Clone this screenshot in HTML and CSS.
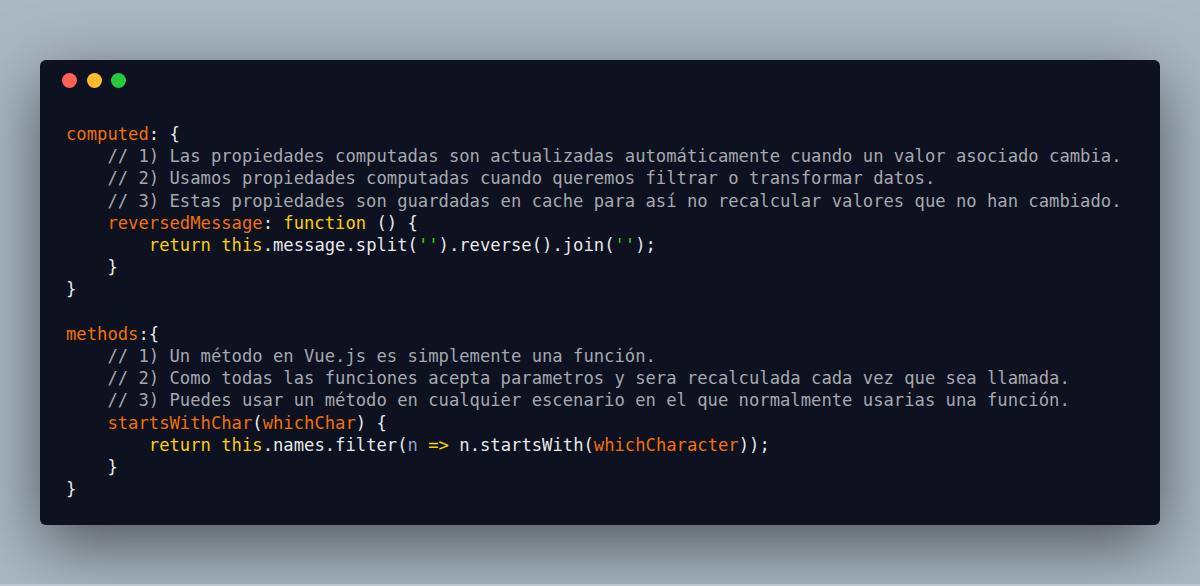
FILE: index.html
```html
<!DOCTYPE html>
<html lang="es">
<head>
<meta charset="utf-8">
<title>Vue computed vs methods</title>
<link rel="stylesheet" href="styles.css">
</head>
<body>
<div class="stage">
  <div class="window">
    <div class="controls">
      <span class="dot red"></span>
      <span class="dot yellow"></span>
      <span class="dot green"></span>
    </div>
<pre class="code"><span class="k">computed</span><span class="p">: {</span>
    <span class="c">// 1) Las propiedades computadas son actualizadas automáticamente cuando un valor asociado cambia.</span>
    <span class="c">// 2) Usamos propiedades computadas cuando queremos filtrar o transformar datos.</span>
    <span class="c">// 3) Estas propiedades son guardadas en cache para así no recalcular valores que no han cambiado.</span>
    <span class="k">reversedMessage</span><span class="p">: </span><span class="y">function</span><span class="p"> () {</span>
        <span class="y">return</span> <span class="y">this</span><span class="p">.message.split(</span><span class="s">''</span><span class="p">).reverse().join(</span><span class="s">''</span><span class="p">);</span>
    <span class="p">}</span>
<span class="p">}</span>

<span class="k">methods</span><span class="p">:{</span>
    <span class="c">// 1) Un método en Vue.js es simplemente una función.</span>
    <span class="c">// 2) Como todas las funciones acepta parametros y sera recalculada cada vez que sea llamada.</span>
    <span class="c">// 3) Puedes usar un método en cualquier escenario en el que normalmente usarias una función.</span>
    <span class="k">startsWithChar</span><span class="p">(</span><span class="k">whichChar</span><span class="p">) {</span>
        <span class="y">return</span> <span class="y">this</span><span class="p">.names.filter(</span><span class="v">n</span> <span class="y">=&gt;</span><span class="p"> n.startsWith(</span><span class="k">whichCharacter</span><span class="p">));</span>
    <span class="p">}</span>
<span class="p">}</span></pre>
  </div>
</div>
</body>
</html>
```
FILE: styles.css
```css
html, body {
  margin: 0;
  padding: 0;
}

body {
  background: #abb8c3;
  height: 584px;
  border-bottom: 2px solid #bcc5cc;
  overflow: hidden;
}

.stage {
  padding: 60px 40px 0 40px;
}

.window {
  box-sizing: border-box;
  height: 465px;
  background: #0d1120;
  border-radius: 6px;
  box-shadow: 0 20px 68px rgba(0, 0, 0, 0.55);
  padding: 13px 0 0 22px;
}

.controls {
  display: flex;
  gap: 9.5px;
}

.dot {
  display: block;
  width: 15px;
  height: 15px;
  border-radius: 50%;
}

.red { background: #ff5f56; }
.yellow { background: #ffbd2e; }
.green { background: #27c93f; }

.code {
  margin: 35px 0 0 4px;
  font-family: "DejaVu Sans Mono", monospace;
  font-size: 17.2px;
  line-height: 22.2px;
  color: #e6e6e6;
}

.k { color: #f0700a; }
.y { color: #fad000; }
.c { color: #a6a8ae; }
.s { color: #3ad900; }
.v { color: #8ea6c8; }
.p { color: #e8e8e8; }
```
